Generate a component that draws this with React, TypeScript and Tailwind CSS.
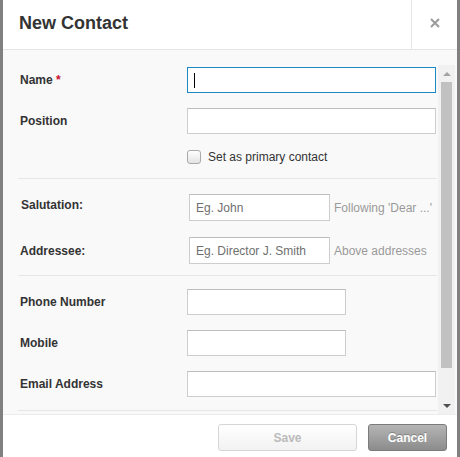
import React from 'react'

const font = { fontFamily: '"Liberation Sans", Arial, sans-serif' }

function Field({ width, focused, placeholder }: { width: string; focused?: boolean; placeholder?: string }) {
  return (
    <div
      className={`${width} h-[26px] bg-white border flex items-center pl-[6px] text-[12px] text-[#6f6f6f] ${
        focused ? 'border-[#1b8bbf]' : 'border-[#cdcdcd] border-t-[#bdbdbd]'
      }`}
    >
      {focused && <div className="w-[1px] h-[15px] bg-black" />}
      {placeholder}
    </div>
  )
}

function Label({ children }: { children: React.ReactNode }) {
  return <div className="w-[167px] shrink-0 text-[12px] font-bold text-[#333]">{children}</div>
}

function Divider() {
  return <div className="ml-[15px] mr-[1px] h-[1px] bg-[#e6e6e6]" />
}

export default function App() {
  return (
    <div className="w-[460px] h-[457px] bg-[#808080] flex px-[3px] overflow-hidden" style={font}>
      <div className="flex-1 bg-white flex flex-col">
        {/* Header */}
        <header className="h-[50px] shrink-0 flex border-b border-[#e5e5e5]">
          <h1 className="flex-1 flex items-center pl-[16px] pb-[3px] text-[18px] font-bold text-[#333]">
            New Contact
          </h1>
          <div className="w-[46px] border-l border-[#e5e5e5] flex items-center justify-center pb-[3px]">
            <svg width="10" height="10" viewBox="0 0 10 10">
              <path d="M1 1L9 9M9 1L1 9" stroke="#9a9a9a" strokeWidth="2" />
            </svg>
          </div>
        </header>

        {/* Body */}
        <div className="h-[364px] shrink-0 flex bg-[#f9f9f9] overflow-hidden">
          <div className="flex-1 pt-[17px]">
            <div className="flex items-center pl-[17px]">
              <Label>
                Name <span className="text-[#c8102e]">*</span>
              </Label>
              <Field width="w-[249px]" focused />
            </div>
            <div className="flex items-center pl-[17px] mt-[15px]">
              <Label>Position</Label>
              <Field width="w-[249px]" />
            </div>
            <div className="flex items-center pl-[184px] mt-[16px] h-[14px]">
              <div className="w-[14px] h-[14px] rounded-[3px] border border-[#a9a9a9] bg-gradient-to-b from-white to-[#e3e3e3]" />
              <span className="ml-[7px] text-[12px] text-[#333]">Set as primary contact</span>
            </div>
            <div className="mt-[14px]">
              <Divider />
            </div>
            <div className="flex items-center pl-[18px] mt-[15px]">
              <div className="w-[166px] shrink-0 text-[12px] font-bold text-[#333] pb-[6px]">Salutation:</div>
              <div className="ml-[2px]">
                <Field width="w-[141px] h-[27px]" placeholder="Eg. John" />
              </div>
              <span className="ml-[4px] text-[12px] text-[#999]">Following 'Dear ...'</span>
            </div>
            <div className="flex items-center pl-[17px] mt-[16px]">
              <Label>Addressee:</Label>
              <div className="ml-[2px]">
                <Field width="w-[141px] h-[27px]" placeholder="Eg. Director J. Smith" />
              </div>
              <span className="ml-[4px] text-[12px] text-[#999]">Above addresses</span>
            </div>
            <div className="mt-[11px]">
              <Divider />
            </div>
            <div className="flex items-center pl-[17px] mt-[13px]">
              <Label>Phone Number</Label>
              <Field width="w-[159px]" />
            </div>
            <div className="flex items-center pl-[17px] mt-[15px]">
              <Label>Mobile</Label>
              <Field width="w-[159px]" />
            </div>
            <div className="flex items-center pl-[17px] mt-[15px]">
              <Label>Email Address</Label>
              <Field width="w-[249px]" />
            </div>
            <div className="mt-[13px]">
              <Divider />
            </div>
          </div>

          {/* Scrollbar */}
          <div className="w-[17px] mt-[15px] mr-[2px] bg-[#f1f1f1] flex flex-col">
            <div className="h-[17px] flex items-center justify-center">
              <svg width="8" height="4" viewBox="0 0 8 4">
                <path d="M0 4L4 0L8 4Z" fill="#a3a3a3" />
              </svg>
            </div>
            <div className="mx-[3px] h-[286px] bg-[#c1c1c1]" />
            <div className="flex-1" />
            <div className="h-[17px] flex items-center justify-center pt-[1px]">
              <svg width="8" height="4" viewBox="0 0 8 4">
                <path d="M0 0L8 0L4 4Z" fill="#505050" />
              </svg>
            </div>
          </div>
        </div>

        {/* Footer */}
        <footer className="flex-1 border-t border-[#ececec] flex justify-end items-start pt-[9px] pr-[10px] gap-[11px]">
          <button className="w-[139px] h-[27px] rounded-[3px] border border-[#d6d6d6] bg-gradient-to-b from-white to-[#f2f2f2] text-[12px] font-bold text-[#bbbbbb]">
            Save
          </button>
          <button
            className="w-[79px] h-[27px] rounded-[3px] border border-[#7b7b7b] bg-gradient-to-b from-[#b5b5b5] to-[#8c8c8c] text-[12px] font-bold text-white"
            style={{ textShadow: '0 -1px 0 rgba(0,0,0,0.25)' }}
          >
            Cancel
          </button>
        </footer>
      </div>
    </div>
  )
}
